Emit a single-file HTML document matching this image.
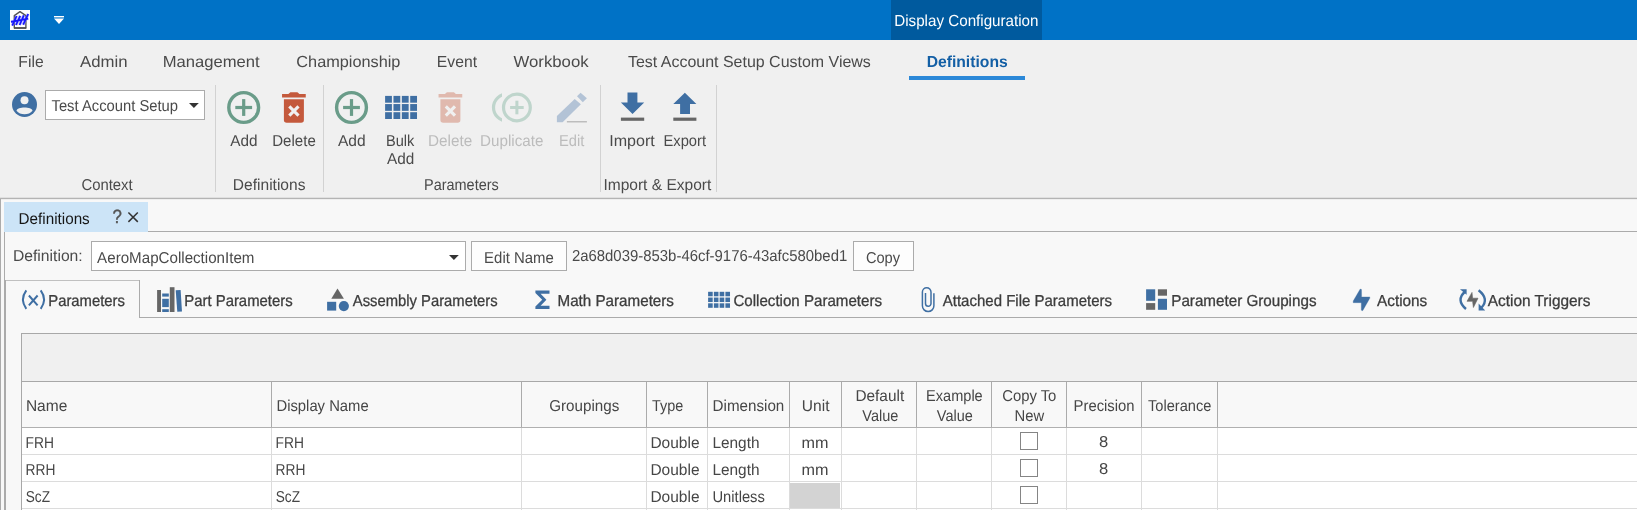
<!DOCTYPE html>
<html><head><meta charset="utf-8"><title>Display Configuration</title>
<style>

html,body{margin:0;padding:0;}
body{width:1637px;height:510px;background:#f8f8f8;font-family:"Liberation Sans",sans-serif;}
#root{position:relative;width:1637px;height:510px;overflow:hidden;background:#f8f8f8;}
.a{position:absolute;}
.t{position:absolute;white-space:nowrap;line-height:20px;height:20px;transform-origin:0 0;text-rendering:geometricPrecision;}
#tx{position:absolute;left:0;top:0;width:1637px;height:510px;will-change:transform;opacity:0.999;}
.tab{-webkit-text-stroke:0.3px #3c3c3c;}
.q{-webkit-text-stroke:0.4px #555;}
svg{position:absolute;left:0;top:0;overflow:visible;}

</style></head>
<body>
<div id="root">
<div class="a" style="left:0px;top:0px;width:1637px;height:40px;background:#0072c6;"></div>
<div class="a" style="left:891px;top:0px;width:151px;height:40px;background:#005a9e;"></div>
<div class="a" style="left:0px;top:40px;width:1637px;height:157px;background:#f0f0f0;"></div>
<div class="a" style="left:0px;top:197px;width:1637px;height:1px;background:#e0e0e0;"></div>
<div class="a" style="left:0px;top:198px;width:1637px;height:1px;background:#b4b4b4;"></div>
<div class="a" style="left:0px;top:199px;width:1637px;height:1px;background:#eeeeee;"></div>
<div class="a" style="left:909px;top:76px;width:116px;height:4px;background:#2b88d8;"></div>
<div class="a" style="left:215px;top:85px;width:1px;height:107px;background:#d2d2d2;"></div>
<div class="a" style="left:323px;top:85px;width:1px;height:107px;background:#d2d2d2;"></div>
<div class="a" style="left:600px;top:85px;width:1px;height:107px;background:#d2d2d2;"></div>
<div class="a" style="left:716px;top:85px;width:1px;height:107px;background:#d2d2d2;"></div>
<div class="a" style="left:45px;top:90px;width:160px;height:30px;background:#ffffff;box-sizing:border-box;border:1px solid #ababab;"></div>
<div class="a" style="left:0px;top:199px;width:1px;height:311px;background:#ababab;"></div>
<div class="a" style="left:4px;top:202px;width:144px;height:30px;background:#cce4f7;"></div>
<div class="a" style="left:148px;top:231px;width:1489px;height:1px;background:#ababab;"></div>
<div class="a" style="left:4px;top:232px;width:1px;height:278px;background:#ababab;"></div>
<div class="a" style="left:91px;top:241px;width:375px;height:30px;background:#ffffff;box-sizing:border-box;border:1px solid #ababab;"></div>
<div class="a" style="left:471px;top:241px;width:96px;height:30px;background:#fdfdfd;box-sizing:border-box;border:1px solid #ababab;"></div>
<div class="a" style="left:853px;top:241px;width:61px;height:30px;background:#fdfdfd;box-sizing:border-box;border:1px solid #ababab;"></div>
<div class="a" style="left:5px;top:280px;width:135px;height:1px;background:#c0c0c0;"></div>
<div class="a" style="left:5px;top:280px;width:1px;height:230px;background:#ababab;"></div>
<div class="a" style="left:139px;top:280px;width:1px;height:38px;background:#ababab;"></div>
<div class="a" style="left:139px;top:317px;width:1498px;height:1px;background:#ababab;"></div>
<div class="a" style="left:21px;top:333px;width:1616px;height:49px;background:#f0f0f0;box-sizing:border-box;border:1px solid #a8a8a8;border-right:none;"></div>
<div class="a" style="left:21px;top:382px;width:1px;height:128px;background:#a8a8a8;"></div>
<div class="a" style="left:22px;top:427px;width:1615px;height:1px;background:#b0b0b0;"></div>
<div class="a" style="left:22px;top:428px;width:1615px;height:82px;background:#ffffff;"></div>
<div class="a" style="left:22px;top:454px;width:1615px;height:1px;background:#dcdcdc;"></div>
<div class="a" style="left:22px;top:481px;width:1615px;height:1px;background:#dcdcdc;"></div>
<div class="a" style="left:22px;top:508px;width:1615px;height:1px;background:#dcdcdc;"></div>
<div class="a" style="left:271px;top:382px;width:1px;height:45px;background:#ababab;"></div>
<div class="a" style="left:271px;top:428px;width:1px;height:82px;background:#dcdcdc;"></div>
<div class="a" style="left:521px;top:382px;width:1px;height:45px;background:#ababab;"></div>
<div class="a" style="left:521px;top:428px;width:1px;height:82px;background:#dcdcdc;"></div>
<div class="a" style="left:646px;top:382px;width:1px;height:45px;background:#ababab;"></div>
<div class="a" style="left:646px;top:428px;width:1px;height:82px;background:#dcdcdc;"></div>
<div class="a" style="left:707px;top:382px;width:1px;height:45px;background:#ababab;"></div>
<div class="a" style="left:707px;top:428px;width:1px;height:82px;background:#dcdcdc;"></div>
<div class="a" style="left:789px;top:382px;width:1px;height:45px;background:#ababab;"></div>
<div class="a" style="left:789px;top:428px;width:1px;height:82px;background:#dcdcdc;"></div>
<div class="a" style="left:841px;top:382px;width:1px;height:45px;background:#ababab;"></div>
<div class="a" style="left:841px;top:428px;width:1px;height:82px;background:#dcdcdc;"></div>
<div class="a" style="left:916px;top:382px;width:1px;height:45px;background:#ababab;"></div>
<div class="a" style="left:916px;top:428px;width:1px;height:82px;background:#dcdcdc;"></div>
<div class="a" style="left:991px;top:382px;width:1px;height:45px;background:#ababab;"></div>
<div class="a" style="left:991px;top:428px;width:1px;height:82px;background:#dcdcdc;"></div>
<div class="a" style="left:1066px;top:382px;width:1px;height:45px;background:#ababab;"></div>
<div class="a" style="left:1066px;top:428px;width:1px;height:82px;background:#dcdcdc;"></div>
<div class="a" style="left:1141px;top:382px;width:1px;height:45px;background:#ababab;"></div>
<div class="a" style="left:1141px;top:428px;width:1px;height:82px;background:#dcdcdc;"></div>
<div class="a" style="left:1217px;top:382px;width:1px;height:45px;background:#ababab;"></div>
<div class="a" style="left:1217px;top:428px;width:1px;height:82px;background:#dcdcdc;"></div>
<div class="a" style="left:790px;top:483px;width:50px;height:25px;background:#d3d3d3;"></div>
<div class="a" style="left:1020px;top:432px;width:18px;height:18px;background:#ffffff;box-sizing:border-box;border:1px solid #858585;"></div>
<div class="a" style="left:1020px;top:459px;width:18px;height:18px;background:#ffffff;box-sizing:border-box;border:1px solid #858585;"></div>
<div class="a" style="left:1020px;top:486px;width:18px;height:18px;background:#ffffff;box-sizing:border-box;border:1px solid #858585;"></div>
<svg width="1637" height="510" viewBox="0 0 1637 510">
<rect x="10" y="10" width="20" height="20" fill="#fff"/>
<path d="M14.3 28 V15.6 L20 11.7 L25.9 15.6 V28 Z" fill="none" stroke="#555" stroke-width="1.4" stroke-linejoin="round"/>
<path d="M14 28 H26.2" stroke="#444" stroke-width="1.2" fill="none"/>
<path d="M11 21.8 L28.2 18.6 M12.3 25.6 L16.6 16 M16 25 L20.2 15.8 M19.6 25 L23.8 15.4 M23.2 24.6 L28.2 14" stroke="#7d7dff" stroke-opacity="0.55" stroke-width="3" fill="none"/>
<path d="M11 21.8 L28.2 18.6 M12.3 25.6 L16.6 16 M16 25 L20.2 15.8 M19.6 25 L23.8 15.4 M23.2 24.6 L28.2 14" stroke="#1515ff" stroke-width="1.7" fill="none"/>
<rect x="54" y="16" width="10" height="1.4" fill="#fff"/>
<path d="M54 18.6 H64 L59 24 Z" fill="#fff"/>
<circle cx="24.5" cy="104.5" r="12.5" fill="#3f6fa3"/>
<circle cx="24.5" cy="100.3" r="4" fill="#f0f0f0"/>
<path d="M16.5 110.8 C17 106.5 32 106.5 32.5 110.8 C29 115.5 20 115.5 16.5 110.8 Z" fill="#f0f0f0"/>
<path d="M189 103 H198.8 L193.9 108 Z" fill="#333"/>
<path d="M449 255 H458.8 L453.9 260 Z" fill="#333"/>
<circle cx="243.7" cy="107.5" r="14.9" fill="none" stroke="#6a9c89" stroke-width="3.4"/><rect x="235.29999999999998" y="105.9" width="16.8" height="3.2" fill="#6a9c89"/><rect x="242.1" y="99.1" width="3.2" height="16.8" fill="#6a9c89"/>
<circle cx="351.5" cy="107.5" r="14.9" fill="none" stroke="#6a9c89" stroke-width="3.4"/><rect x="343.1" y="105.9" width="16.8" height="3.2" fill="#6a9c89"/><rect x="349.9" y="99.1" width="3.2" height="16.8" fill="#6a9c89"/>
<path d="M282.04999999999995 94.1 H288.4 L290.4 92.3 H297.4 L299.4 94.1 H305.75 V97.5 H282.04999999999995 Z" fill="#c4593c"/><path d="M283.9 99.3 H303.9 V120 Q303.9 122.8 301.09999999999997 122.8 H286.7 Q283.9 122.8 283.9 120 Z" fill="#c4593c"/><path d="M289.29999999999995 106.4 L298.5 115.7 M298.5 106.4 L289.29999999999995 115.7" stroke="#f0f0f0" stroke-width="3.1" fill="none"/>
<path d="M438.54999999999995 94.1 H444.9 L446.9 92.3 H453.9 L455.9 94.1 H462.25 V97.5 H438.54999999999995 Z" fill="#e0b9ae"/><path d="M440.4 99.3 H460.4 V120 Q460.4 122.8 457.59999999999997 122.8 H443.2 Q440.4 122.8 440.4 120 Z" fill="#e0b9ae"/><path d="M445.79999999999995 106.4 L455.0 115.7 M455.0 106.4 L445.79999999999995 115.7" stroke="#f0f0f0" stroke-width="3.1" fill="none"/>
<rect x="385.10" y="95.90" width="6.8" height="6.8" fill="#3f6fa3"/>
<rect x="393.47" y="95.90" width="6.8" height="6.8" fill="#3f6fa3"/>
<rect x="401.84" y="95.90" width="6.8" height="6.8" fill="#3f6fa3"/>
<rect x="410.21" y="95.90" width="6.8" height="6.8" fill="#3f6fa3"/>
<rect x="385.10" y="104.05" width="6.8" height="6.8" fill="#3f6fa3"/>
<rect x="393.47" y="104.05" width="6.8" height="6.8" fill="#3f6fa3"/>
<rect x="401.84" y="104.05" width="6.8" height="6.8" fill="#3f6fa3"/>
<rect x="410.21" y="104.05" width="6.8" height="6.8" fill="#3f6fa3"/>
<rect x="385.10" y="112.20" width="6.8" height="6.8" fill="#3f6fa3"/>
<rect x="393.47" y="112.20" width="6.8" height="6.8" fill="#3f6fa3"/>
<rect x="401.84" y="112.20" width="6.8" height="6.8" fill="#3f6fa3"/>
<rect x="410.21" y="112.20" width="6.8" height="6.8" fill="#3f6fa3"/>
<circle cx="516.9" cy="107.5" r="13.4" fill="none" stroke="#bfd5cc" stroke-width="3.2"/><rect x="510.09999999999997" y="106.0" width="13.6" height="3.0" fill="#bfd5cc"/><rect x="515.4" y="100.7" width="3.0" height="13.6" fill="#bfd5cc"/>
<clipPath id="dupc"><rect x="485" y="88" width="16.9" height="40"/></clipPath>
<circle cx="506.9" cy="107.5" r="13.4" fill="none" stroke="#bfd5cc" stroke-width="3.2" clip-path="url(#dupc)"/>
<path d="M556.9 122.3 V116 L574.7 98.9 L580.9 104.3 L562.6 122.3 Z" fill="#b3c3d6"/>
<path d="M577 96.2 L580.6 92.8 L586.9 98.2 L582.8 102.3 Z" fill="#b3c3d6"/>
<rect x="566.9" y="121" width="20" height="1.5" fill="#bdbdbd"/>
<path d="M627.5 92.4 H637.4 V102.5 H644.2 L632.55 114 L620.9 102.5 H627.5 Z" fill="#3f6fa3"/>
<rect x="620.9" y="117.6" width="23.3" height="3.2" fill="#666666"/>
<path d="M684.85 92.8 L696.4 103.9 H690 V114 H680.1 V103.9 H673.3 Z" fill="#3f6fa3"/>
<rect x="673.3" y="117.6" width="23.1" height="3.2" fill="#666666"/>
<path d="M128.4 212.5 L137.8 221.9 M137.8 212.5 L128.4 221.9" stroke="#333" stroke-width="1.5" fill="none"/>
<path d="M26.3 290.4 Q19.6 299.6 26.3 308.8" stroke="#3f6fa3" stroke-width="2" fill="none"/>
<path d="M40.7 290.4 Q47.4 299.6 40.7 308.8" stroke="#3f6fa3" stroke-width="2" fill="none"/>
<path d="M28.9 295.5 L37.6 305.4 M37.6 295.5 L28.9 305.4" stroke="#3f6fa3" stroke-width="2" fill="none"/>
<rect x="157.1" y="290" width="3.9" height="22" fill="#666666"/>
<rect x="162.2" y="293.5" width="6.6" height="3.1" fill="#3f6fa3"/>
<rect x="162.2" y="298.8" width="6.6" height="8.3" fill="#3f6fa3"/>
<rect x="162.2" y="309.2" width="6.6" height="2.8" fill="#3f6fa3"/>
<rect x="169.8" y="287.2" width="4.7" height="24.8" fill="#666666"/>
<path d="M175.7 290.3 L180.6 290 L182 311.4 L177.3 311.8 Z" fill="#3f6fa3"/>
<path d="M337.5 288.5 L343.9 298.7 H331.3 Z" fill="#666666"/>
<rect x="327.1" y="301.8" width="9.1" height="8.8" fill="#3f6fa3"/>
<circle cx="343.85" cy="306.05" r="5.1" fill="#3f6fa3"/>
<path d="M535.4 290.6 H549.5 V293.8 H540.6 L546.4 299.75 L540.6 305.7 H549.5 V308.9 H535.4 V306.4 L542.2 299.75 L535.4 293.1 Z" fill="#3f6fa3"/>
<rect x="708.10" y="291.80" width="4.6" height="4.5" fill="#3f6fa3"/>
<rect x="713.87" y="291.80" width="4.6" height="4.5" fill="#3f6fa3"/>
<rect x="719.64" y="291.80" width="4.6" height="4.5" fill="#3f6fa3"/>
<rect x="725.41" y="291.80" width="4.6" height="4.5" fill="#3f6fa3"/>
<rect x="708.10" y="297.55" width="4.6" height="4.5" fill="#3f6fa3"/>
<rect x="713.87" y="297.55" width="4.6" height="4.5" fill="#3f6fa3"/>
<rect x="719.64" y="297.55" width="4.6" height="4.5" fill="#3f6fa3"/>
<rect x="725.41" y="297.55" width="4.6" height="4.5" fill="#3f6fa3"/>
<rect x="708.10" y="303.30" width="4.6" height="4.5" fill="#3f6fa3"/>
<rect x="713.87" y="303.30" width="4.6" height="4.5" fill="#3f6fa3"/>
<rect x="719.64" y="303.30" width="4.6" height="4.5" fill="#3f6fa3"/>
<rect x="725.41" y="303.30" width="4.6" height="4.5" fill="#3f6fa3"/>
<path d="M933.9 293.3 V305.8 A5.75 5.75 0 0 1 922.4 305.8 V292 A4.3 4.3 0 0 1 931 292 V303.6 A2.75 2.75 0 0 1 925.5 303.6 V293" stroke="#3f6fa3" stroke-width="1.5" fill="none"/>
<rect x="1146.1" y="289.3" width="9.1" height="11.5" fill="#3f6fa3"/>
<rect x="1157.9" y="289.3" width="9.1" height="6.4" fill="#666666"/>
<rect x="1146.1" y="303.1" width="9.1" height="6.7" fill="#666666"/>
<rect x="1157.9" y="298.8" width="9.1" height="11" fill="#3f6fa3"/>
<path d="M1360.2 289 L1361.5 289.4 L1361.6 296.9 H1369.8 L1369.8 298.3 L1362.7 310.7 L1361.3 310.2 V302.7 H1353.2 L1353.2 301 Z" fill="#3f6fa3" stroke="#3f6fa3" stroke-width="0.3" stroke-linejoin="round"/>
<path d="M1465.2 291.5 Q1455.5 300 1466 309" stroke="#3f6fa3" stroke-width="2.4" fill="none"/>
<path d="M1460 289.3 H1466.6 V294.8 Z" fill="#3f6fa3"/>
<path d="M1478.6 290.3 Q1489.5 299 1481.5 307.5" stroke="#3f6fa3" stroke-width="2.4" fill="none"/>
<path d="M1478.6 303.5 V310.4 H1485.2 Z" fill="#3f6fa3"/>
<path d="M1472 292.4 L1472.6 298.2 H1478 L1473.4 307.5 L1472.6 301.3 H1467 Z" fill="#666666" stroke="#666666" stroke-width="0.6" stroke-linejoin="round"/>
</svg>
<div id="tx">
<span class="t" style="left:894px;top:12px;font-size:16.0px;color:#ffffff;transform:translateX(0.26px) scaleX(0.9484);">Display Configuration</span>
<span class="t" style="left:18px;top:53px;font-size:16.0px;color:#4a4a4a;transform:translateX(0.36px) scaleX(0.9787);">File</span>
<span class="t" style="left:80px;top:53px;font-size:16.0px;color:#4a4a4a;transform:translateX(0.10px) scaleX(1.0471);">Admin</span>
<span class="t" style="left:162px;top:53px;font-size:16.0px;color:#4a4a4a;transform:translateX(0.78px) scaleX(1.0378);">Management</span>
<span class="t" style="left:296px;top:53px;font-size:16.0px;color:#4a4a4a;transform:translateX(0.35px) scaleX(1.0173);">Championship</span>
<span class="t" style="left:436px;top:53px;font-size:16.0px;color:#4a4a4a;transform:translateX(0.86px) scaleX(0.9808);">Event</span>
<span class="t" style="left:513px;top:53px;font-size:16.0px;color:#4a4a4a;transform:translateX(0.55px) scaleX(1.0463);">Workbook</span>
<span class="t" style="left:627px;top:53px;font-size:16.0px;color:#4a4a4a;transform:translateX(0.99px) scaleX(0.9978);">Test Account Setup Custom Views</span>
<span class="t" style="left:926px;top:53px;font-size:16.0px;color:#135fa5;transform:translateX(0.64px) scaleX(0.9805);font-weight:700;">Definitions</span>
<span class="t" style="left:51px;top:97px;font-size:15.8px;color:#4a4a4a;transform:translateX(0.51px) scaleX(0.9358);">Test Account Setup</span>
<span class="t" style="left:230px;top:132px;font-size:15.8px;color:#4a4a4a;transform:translateX(0.27px) scaleX(0.9703);">Add</span>
<span class="t" style="left:272px;top:132px;font-size:15.8px;color:#4a4a4a;transform:translateX(0.26px) scaleX(0.9524);">Delete</span>
<span class="t" style="left:337px;top:132px;font-size:15.8px;color:#4a4a4a;transform:translateX(0.94px) scaleX(0.9857);">Add</span>
<span class="t" style="left:385px;top:132px;font-size:15.8px;color:#4a4a4a;transform:translateX(0.98px) scaleX(0.9247);">Bulk</span>
<span class="t" style="left:387px;top:150px;font-size:15.8px;color:#4a4a4a;transform:translateX(0.07px) scaleX(0.9703);">Add</span>
<span class="t" style="left:428px;top:132px;font-size:15.8px;color:#bcbcbc;transform:translateX(0.04px) scaleX(0.9683);">Delete</span>
<span class="t" style="left:480px;top:132px;font-size:15.8px;color:#bcbcbc;transform:translateX(0.05px) scaleX(0.9610);">Duplicate</span>
<span class="t" style="left:558px;top:132px;font-size:15.8px;color:#bcbcbc;transform:translateX(0.93px) scaleX(0.9328);">Edit</span>
<span class="t" style="left:609px;top:132px;font-size:15.8px;color:#4a4a4a;transform:translateX(0.20px) scaleX(1.0171);">Import</span>
<span class="t" style="left:663px;top:132px;font-size:15.8px;color:#4a4a4a;transform:translateX(0.49px) scaleX(0.9310);">Export</span>
<span class="t" style="left:81px;top:176px;font-size:15.8px;color:#4a4a4a;transform:translateX(0.42px) scaleX(0.9418);">Context</span>
<span class="t" style="left:232px;top:176px;font-size:15.8px;color:#4a4a4a;transform:translateX(0.87px) scaleX(0.9834);">Definitions</span>
<span class="t" style="left:423px;top:176px;font-size:15.8px;color:#4a4a4a;transform:translateX(0.99px) scaleX(0.9159);">Parameters</span>
<span class="t" style="left:603px;top:176px;font-size:15.8px;color:#4a4a4a;transform:translateX(0.40px) scaleX(0.9828);">Import &amp; Export</span>
<span class="t" style="left:18px;top:210px;font-size:15.8px;color:#161616;transform:translateX(0.60px) scaleX(0.9645);">Definitions</span>
<span class="t q" style="left:112px;top:208px;font-size:19.2px;color:#555555;transform:translateX(0.51px) scaleX(0.8781);">?</span>
<span class="t" style="left:12px;top:247px;font-size:15.8px;color:#4a4a4a;transform:translateX(0.90px) scaleX(0.9936);">Definition:</span>
<span class="t" style="left:97px;top:249px;font-size:15.8px;color:#4a4a4a;transform:translateX(0.12px) scaleX(0.9584);">AeroMapCollectionItem</span>
<span class="t" style="left:484px;top:249px;font-size:15.8px;color:#4a4a4a;transform:translateX(0.12px) scaleX(0.9451);">Edit Name</span>
<span class="t" style="left:571px;top:247px;font-size:15.8px;color:#4a4a4a;transform:translateX(0.89px) scaleX(0.9443);">2a68d039-853b-46cf-9176-43afc580bed1</span>
<span class="t" style="left:865px;top:249px;font-size:15.8px;color:#4a4a4a;transform:translateX(0.88px) scaleX(0.9250);">Copy</span>
<span class="t tab" style="left:48px;top:292px;font-size:15.9px;color:#3c3c3c;transform:translateX(0.31px) scaleX(0.9323);">Parameters</span>
<span class="t tab" style="left:184px;top:292px;font-size:15.9px;color:#3c3c3c;transform:translateX(0.30px) scaleX(0.9362);">Part Parameters</span>
<span class="t tab" style="left:352px;top:292px;font-size:15.9px;color:#3c3c3c;transform:translateX(0.79px) scaleX(0.9314);">Assembly Parameters</span>
<span class="t tab" style="left:557px;top:292px;font-size:15.9px;color:#3c3c3c;transform:translateX(0.49px) scaleX(0.9557);">Math Parameters</span>
<span class="t tab" style="left:733px;top:292px;font-size:15.9px;color:#3c3c3c;transform:translateX(0.42px) scaleX(0.9507);">Collection Parameters</span>
<span class="t tab" style="left:942px;top:292px;font-size:15.9px;color:#3c3c3c;transform:translateX(0.79px) scaleX(0.9437);">Attached File Parameters</span>
<span class="t tab" style="left:1171px;top:292px;font-size:15.9px;color:#3c3c3c;transform:translateX(0.29px) scaleX(0.9557);">Parameter Groupings</span>
<span class="t tab" style="left:1377px;top:292px;font-size:15.9px;color:#3c3c3c;transform:translateX(0.06px) scaleX(0.9631);">Actions</span>
<span class="t tab" style="left:1487px;top:292px;font-size:15.9px;color:#3c3c3c;transform:translateX(0.70px) scaleX(0.9696);">Action Triggers</span>
<span class="t" style="left:25px;top:397px;font-size:15.8px;color:#464646;transform:translateX(0.88px) scaleX(0.9820);">Name</span>
<span class="t" style="left:276px;top:397px;font-size:15.8px;color:#464646;transform:translateX(0.48px) scaleX(0.9371);">Display Name</span>
<span class="t" style="left:549px;top:397px;font-size:15.8px;color:#464646;transform:translateX(0.20px) scaleX(0.9612);">Groupings</span>
<span class="t" style="left:651px;top:397px;font-size:15.8px;color:#464646;transform:translateX(0.97px) scaleX(0.9127);">Type</span>
<span class="t" style="left:712px;top:397px;font-size:15.8px;color:#464646;transform:translateX(0.60px) scaleX(0.9609);">Dimension</span>
<span class="t" style="left:801px;top:397px;font-size:15.8px;color:#464646;transform:translateX(0.87px) scaleX(0.9831);">Unit</span>
<span class="t" style="left:855px;top:387px;font-size:15.8px;color:#464646;transform:translateX(0.44px) scaleX(0.9736);">Default</span>
<span class="t" style="left:862px;top:407px;font-size:15.8px;color:#464646;transform:translateX(0.33px) scaleX(0.9200);">Value</span>
<span class="t" style="left:926px;top:387px;font-size:15.8px;color:#464646;transform:translateX(0.10px) scaleX(0.9212);">Example</span>
<span class="t" style="left:936px;top:407px;font-size:15.8px;color:#464646;transform:translateX(0.80px) scaleX(0.9172);">Value</span>
<span class="t" style="left:1002px;top:387px;font-size:15.8px;color:#464646;transform:translateX(0.22px) scaleX(0.9391);">Copy To</span>
<span class="t" style="left:1014px;top:407px;font-size:15.8px;color:#464646;transform:translateX(0.49px) scaleX(0.9378);">New</span>
<span class="t" style="left:1073px;top:397px;font-size:15.8px;color:#464646;transform:translateX(0.60px) scaleX(0.9380);">Precision</span>
<span class="t" style="left:1148px;top:397px;font-size:15.8px;color:#464646;transform:translateX(0.01px) scaleX(0.9245);">Tolerance</span>
<span class="t" style="left:25px;top:434px;font-size:15.8px;color:#464646;transform:translateX(0.59px) scaleX(0.8727);">FRH</span>
<span class="t" style="left:275px;top:434px;font-size:15.8px;color:#464646;transform:translateX(0.59px) scaleX(0.8727);">FRH</span>
<span class="t" style="left:650px;top:434px;font-size:15.8px;color:#464646;transform:translateX(0.43px) scaleX(0.9808);">Double</span>
<span class="t" style="left:712px;top:434px;font-size:15.8px;color:#464646;transform:translateX(0.38px) scaleX(0.9752);">Length</span>
<span class="t" style="left:801px;top:434px;font-size:15.8px;color:#464646;transform:translateX(0.59px) scaleX(1.0243);">mm</span>
<span class="t" style="left:1099px;top:433px;font-size:15.8px;color:#464646;transform:translateX(0.04px) scaleX(1.0497);">8</span>
<span class="t" style="left:25px;top:461px;font-size:15.8px;color:#464646;transform:translateX(0.58px) scaleX(0.8725);">RRH</span>
<span class="t" style="left:275px;top:461px;font-size:15.8px;color:#464646;transform:translateX(0.58px) scaleX(0.8725);">RRH</span>
<span class="t" style="left:650px;top:461px;font-size:15.8px;color:#464646;transform:translateX(0.43px) scaleX(0.9808);">Double</span>
<span class="t" style="left:712px;top:461px;font-size:15.8px;color:#464646;transform:translateX(0.38px) scaleX(0.9752);">Length</span>
<span class="t" style="left:801px;top:461px;font-size:15.8px;color:#464646;transform:translateX(0.59px) scaleX(1.0243);">mm</span>
<span class="t" style="left:1099px;top:460px;font-size:15.8px;color:#464646;transform:translateX(0.04px) scaleX(1.0497);">8</span>
<span class="t" style="left:25px;top:488px;font-size:15.8px;color:#464646;transform:translateX(0.72px) scaleX(0.8642);">ScZ</span>
<span class="t" style="left:275px;top:488px;font-size:15.8px;color:#464646;transform:translateX(0.72px) scaleX(0.8642);">ScZ</span>
<span class="t" style="left:650px;top:488px;font-size:15.8px;color:#464646;transform:translateX(0.43px) scaleX(0.9808);">Double</span>
<span class="t" style="left:712px;top:488px;font-size:15.8px;color:#464646;transform:translateX(0.40px) scaleX(0.9336);">Unitless</span>
</div>
</div>
</body></html>
